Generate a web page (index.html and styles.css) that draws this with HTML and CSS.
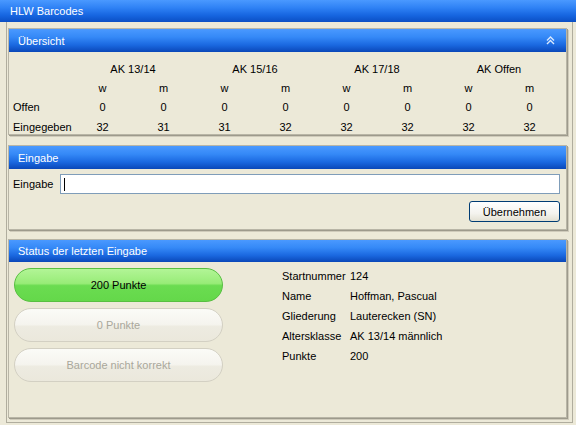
FILE: index.html
```html
<!DOCTYPE html>
<html>
<head>
<meta charset="utf-8">
<link rel="stylesheet" href="styles.css">
</head>
<body>
<div class="titlebar">HLW Barcodes</div>
<div class="frame">
  <section class="panel p-overview">
    <div class="phead">
      <span>Übersicht</span>
      <svg class="chev" width="9" height="9" viewBox="0 0 9 9"><path d="M1 4.5 L4.5 1 L8 4.5 M1 8 L4.5 4.5 L8 8" fill="none" stroke="#d8e8ff" stroke-width="1.4"/></svg>
    </div>
    <div class="pbody">
      <div class="grid">
        <div></div>
        <div class="span2">AK 13/14</div>
        <div class="span2">AK 15/16</div>
        <div class="span2">AK 17/18</div>
        <div class="span2">AK Offen</div>

        <div></div>
        <div>w</div><div>m</div><div>w</div><div>m</div><div>w</div><div>m</div><div>w</div><div>m</div>

        <div class="lbl">Offen</div>
        <div>0</div><div>0</div><div>0</div><div>0</div><div>0</div><div>0</div><div>0</div><div>0</div>

        <div class="lbl">Eingegeben</div>
        <div>32</div><div>31</div><div>31</div><div>32</div><div>32</div><div>32</div><div>32</div><div>32</div>
      </div>
    </div>
  </section>

  <section class="panel p-input">
    <div class="phead"><span>Eingabe</span></div>
    <div class="pbody">
      <div class="inrow">
        <label class="lbl">Eingabe</label>
        <div class="field"><span class="caret"></span></div>
      </div>
      <div class="btnrow"><button class="xpbtn">Übernehmen</button></div>
    </div>
  </section>

  <section class="panel p-status">
    <div class="phead"><span>Status der letzten Eingabe</span></div>
    <div class="pbody status">
      <div class="pills">
        <div class="pill ok">200 Punkte</div>
        <div class="pill off">0 Punkte</div>
        <div class="pill off">Barcode nicht korrekt</div>
      </div>
      <div class="info">
        <div>Startnummer</div><div>124</div>
        <div>Name</div><div>Hoffman, Pascual</div>
        <div>Gliederung</div><div>Lauterecken (SN)</div>
        <div>Altersklasse</div><div>AK 13/14 männlich</div>
        <div>Punkte</div><div>200</div>
      </div>
    </div>
  </section>
</div>
</body>
</html>
```

FILE: styles.css
```css
* { box-sizing: border-box; }
html, body { margin: 0; padding: 0; }
body {
  width: 576px;
  height: 425px;
  overflow: hidden;
  background: #ECE9D8;
  font-family: "Liberation Sans", Arial, sans-serif;
  font-size: 11px;
  color: #000;
}
.titlebar {
  height: 22px;
  line-height: 22px;
  padding-left: 10px;
  color: #fff;
  background: linear-gradient(to bottom, #4a99ff 0%, #2f82f5 35%, #1665e0 70%, #0b4fc4 100%);
}
.frame {
  margin: 0 3px 0 6px;
  height: 401px;
  border: 1px solid #B0AD9E;
  border-top: none;
  padding: 6px 5px 0 1px;
  display: flex;
  flex-direction: column;
}
.panel {
  border: 1px solid #B8B5A6;
  box-shadow: 1px 1px 0 #9D9A8C, 2px 2px 0 #CFCBBB;
  background: #ECE9D8;
}
.phead {
  height: 23px;
  display: flex;
  align-items: center;
  justify-content: space-between;
  padding: 0 10px 0 9px;
  color: #fff;
  background: linear-gradient(to bottom, #4a99ff 0%, #3589f7 35%, #1a68e0 70%, #0a47b8 100%);
}
.chev { display: block; margin-right: 1px; }
.p-overview .pbody { height: 82px; padding: 7px 6px 0 4px; }
.grid {
  display: grid;
  grid-template-columns: 59px repeat(8, 1fr);
  grid-auto-rows: 19.3px;
  align-items: center;
  text-align: center;
}
.grid .span2 { grid-column: span 2; }
.grid .lbl { text-align: left; }

.p-input { margin-top: 10px; }
.p-input .pbody { height: 60px; padding: 5px 6px 0 4px; }
.inrow { display: flex; align-items: center; gap: 7px; height: 20px; }
.field {
  flex: 1;
  height: 20px;
  background: #fff;
  border: 1px solid #7F9DB9;
  position: relative;
}
.caret {
  position: absolute;
  left: 3px;
  top: 3px;
  width: 1px;
  height: 13px;
  background: #000;
}
.btnrow { display: flex; justify-content: flex-end; margin-top: 7px; }
.xpbtn {
  width: 91px;
  height: 21px;
  font: inherit;
  color: #000;
  border: 1px solid #003C74;
  border-radius: 3px;
  background: linear-gradient(to bottom, #ffffff 0%, #f4f3ee 60%, #e3e0d2 100%);
  padding: 0;
}

.p-status { flex: 1; margin-top: 9px; margin-bottom: 4px; }
.p-status .phead { height: 22px; }
.status { display: flex; padding: 2px 6px 0 5px; gap: 59px; }
.pills { width: 209px; display: flex; flex-direction: column; gap: 6px; margin-top: 4px; }
.pill {
  height: 34px;
  border-radius: 17px;
  display: flex;
  align-items: center;
  justify-content: center;
}
.pill.ok {
  border: 1px solid #58BF42;
  background: linear-gradient(to bottom, #b2f596 0%, #98ec78 45%, #6bdc51 52%, #64d84a 100%);
  color: #000;
}
.pill.off {
  border: 1px solid #D3D0C3;
  background: linear-gradient(to bottom, #fbfbf7 0%, #f5f4ee 48%, #edebe1 55%, #ebe8dc 100%);
  color: #A9A79B;
}
.info {
  display: grid;
  grid-template-columns: 68px auto;
  grid-auto-rows: 20px;
  align-items: center;
  align-content: start;
  padding-top: 2px;
}
```
